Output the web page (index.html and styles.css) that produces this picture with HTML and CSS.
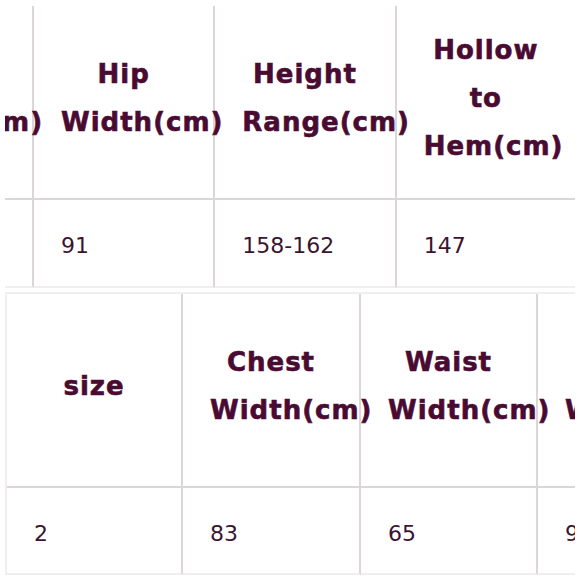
FILE: index.html
```html
<!DOCTYPE html>
<html lang="en">
<head>
<meta charset="utf-8">
<title>Size chart</title>
<link rel="stylesheet" href="styles.css">
</head>
<body>
<div class="panel panel--top">
  <table class="chart chart--top">
    <colgroup>
      <col class="c1"><col class="c2"><col class="c3"><col class="c4"><col class="c5"><col class="c6">
    </colgroup>
    <thead>
      <tr>
        <th>size</th>
        <th>Chest Width(cm)</th>
        <th>Waist Width(cm)</th>
        <th>Hip Width(cm)</th>
        <th>Height Range(cm)</th>
        <th class="last">Hollow to Hem(cm)</th>
      </tr>
    </thead>
    <tbody>
      <tr>
        <td>2</td>
        <td>83</td>
        <td>65</td>
        <td>91</td>
        <td>158-162</td>
        <td class="last">147</td>
      </tr>
    </tbody>
  </table>
</div>
<div class="panel panel--bottom">
  <table class="chart chart--bottom">
    <colgroup>
      <col class="c1"><col class="c2"><col class="c3"><col class="c4"><col class="c5"><col class="c6">
    </colgroup>
    <thead>
      <tr>
        <th>size</th>
        <th>Chest Width(cm)</th>
        <th>Waist Width(cm)</th>
        <th>Hip Width(cm)</th>
        <th>Height Range(cm)</th>
        <th class="last">Hollow to Hem(cm)</th>
      </tr>
    </thead>
    <tbody>
      <tr>
        <td>2</td>
        <td>83</td>
        <td>65</td>
        <td>91</td>
        <td>158-162</td>
        <td class="last">147</td>
      </tr>
    </tbody>
  </table>
</div>
</body>
</html>
```
FILE: styles.css
```css
html, body {
  margin: 0;
  padding: 0;
  background: #ffffff;
}

body {
  width: 580px;
  height: 580px;
  overflow: hidden;
}

.panel {
  margin-left: 5px;
  width: 570px;
  overflow: hidden;
}

.panel--top {
  margin-top: 6px;
}

.panel--bottom {
  margin-top: 4px;
}

.chart {
  border-collapse: separate;
  border-spacing: 0;
  table-layout: fixed;
  border-left: 2px solid #f0eef0;
}

.chart--top {
  width: 1088px;
  margin-left: -516px;
}

.chart--top .c1, .chart--top .c2, .chart--top .c4, .chart--top .c5 { width: 181px; }
.chart--top .c3, .chart--top .c6 { width: 180px; }

.chart--bottom {
  width: 1064px;
  border-top: 2px solid #f0eef0;
}

.chart--bottom .c1 { width: 176px; }
.chart--bottom .c2 { width: 178px; }
.chart--bottom .c3, .chart--bottom .c4, .chart--bottom .c5, .chart--bottom .c6 { width: 177px; }

.chart th,
.chart td {
  box-sizing: border-box;
  border-right: 2px solid #dcd6db;
  padding: 0 27px;
  vertical-align: middle;
  white-space: normal;
}

.chart th {
  height: 194px;
  border-bottom: 2px solid #dcd6db;
  padding-bottom: 8px;
  font-family: "DejaVu Sans", sans-serif;
  font-weight: bold;
  font-size: 26px;
  line-height: 48px;
  letter-spacing: 1px;
  color: #4a0b33;
  -webkit-text-stroke: 0.6px #4a0b33;
  text-align: center;
}

.chart td {
  border-bottom: 2px solid #f0eef0;
  padding-top: 5px;
  font-family: "DejaVu Sans", sans-serif;
  font-weight: normal;
  font-size: 22px;
  color: #3b1431;
  text-align: left;
}

.chart--top td {
  height: 88px;
}

.chart--bottom td {
  height: 87px;
}

.chart .last {
  border-right-color: #eeecee;
}
```
